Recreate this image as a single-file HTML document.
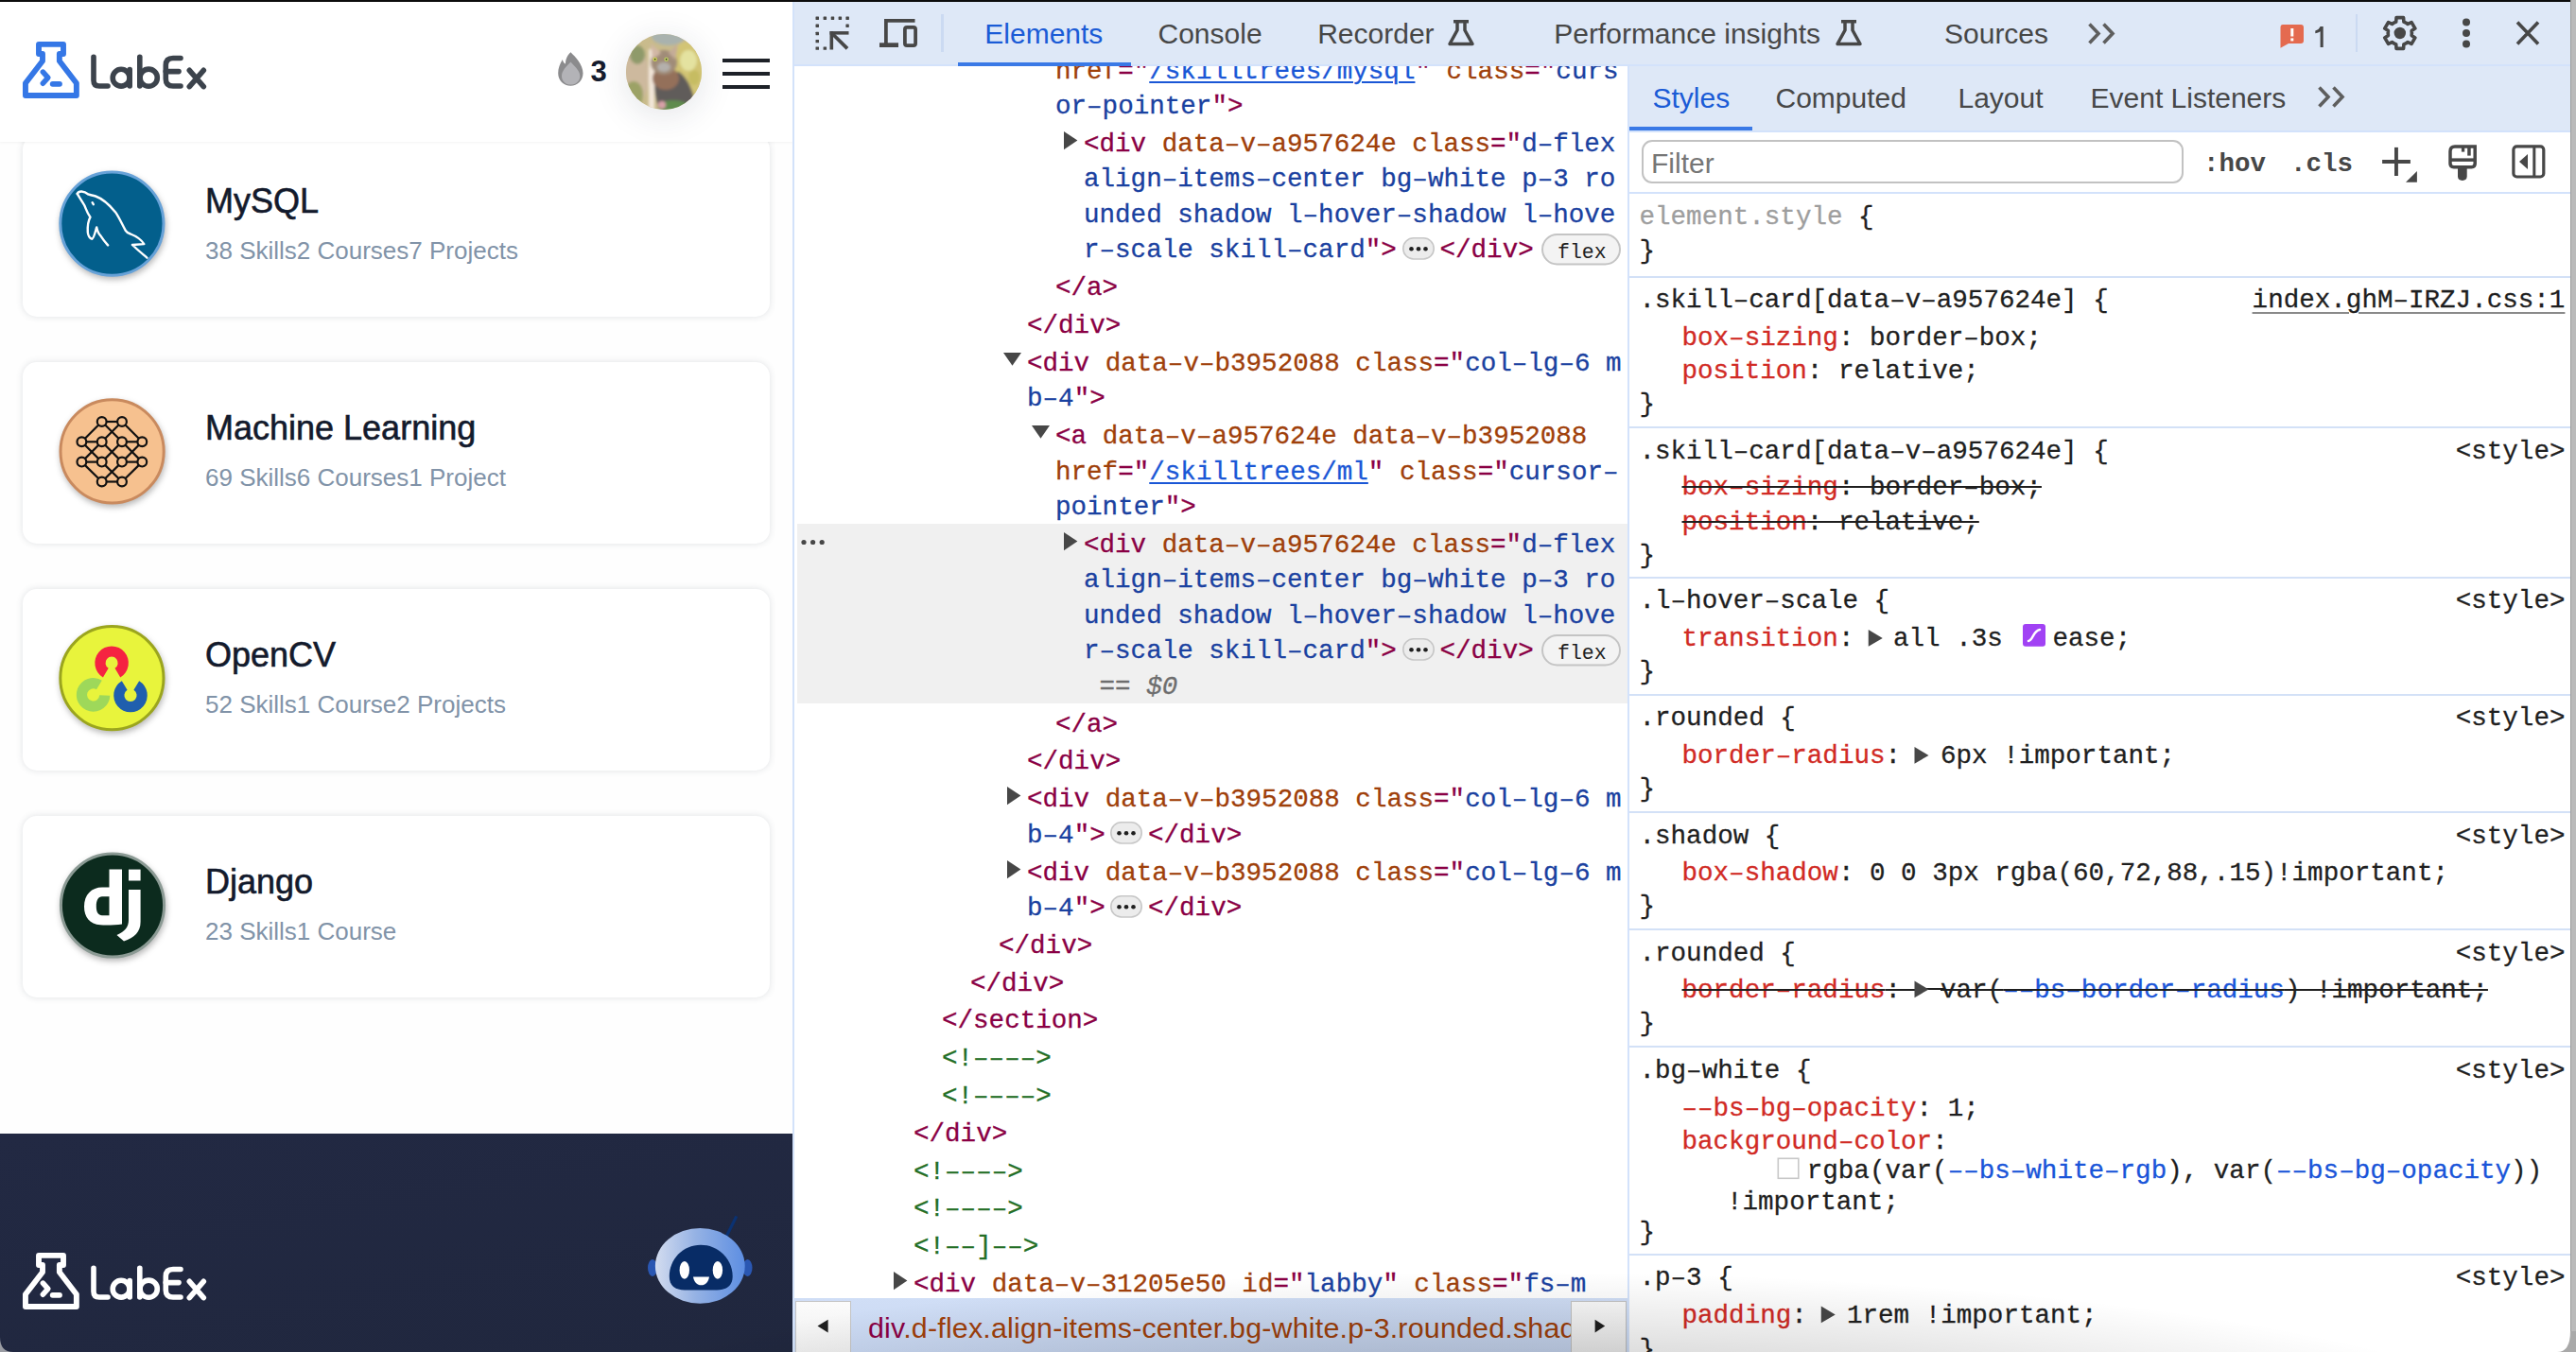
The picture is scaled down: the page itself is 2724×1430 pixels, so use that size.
<!DOCTYPE html><html><head><meta charset="utf-8"><style>
html,body{margin:0;padding:0;}
body{width:2724px;height:1430px;position:relative;overflow:hidden;background:#fff;}
.t{position:absolute;white-space:pre;}
.m{-webkit-text-stroke:0.3px currentColor;}
.r{position:absolute;}
.s{position:absolute;overflow:visible;}
</style></head><body>
<div class="r" style="left:0px;top:0px;width:838px;height:1430px;background:#fefefe;"></div>
<div class="r" style="left:24px;top:143px;width:790px;height:192px;background:#ffffff;border-radius:15px;box-shadow:0 0 7px rgba(60,72,88,.16);"></div>
<div class="r" style="left:24px;top:383px;width:790px;height:192px;background:#ffffff;border-radius:15px;box-shadow:0 0 7px rgba(60,72,88,.16);"></div>
<div class="r" style="left:24px;top:623px;width:790px;height:192px;background:#ffffff;border-radius:15px;box-shadow:0 0 7px rgba(60,72,88,.16);"></div>
<div class="r" style="left:24px;top:863px;width:790px;height:192px;background:#ffffff;border-radius:15px;box-shadow:0 0 7px rgba(60,72,88,.16);"></div>
<div class="r" style="left:0px;top:0px;width:838px;height:150px;background:#ffffff;box-shadow:0 1px 3px rgba(0,0,0,.05);"></div>
<svg class="s" style="left:0px;top:0px" width="240" height="120" viewBox="0 0 240 120">
<g fill="none" stroke-linecap="round" stroke-linejoin="round">
<path d="M45 57 L41 57 L41 46.9 L67 46.9 L67 57 L62.85 57 L62.85 64.5 L80.85 88 L80.85 100.95 L26.95 100.95 L26.95 88 L45 64.5 Z" stroke="#3577e6" stroke-width="5.9"/>
<path d="M45.4 76.2 L50.8 82.2 L45.4 88.2" stroke="#3577e6" stroke-width="5.6"/>
<path d="M55.7 88.8 L63 88.8" stroke="#3577e6" stroke-width="5.8"/>
<g stroke="#3c434c" stroke-width="5.6">
<path d="M99 60.3 L99 85 Q99 91 105 91 L114 91"/>
<circle cx="128.1" cy="82.2" r="8.9"/>
<path d="M137.2 73.6 L137.2 91"/>
<path d="M147.8 60.3 L147.8 91"/>
<circle cx="157.2" cy="82.2" r="9.1"/>
<path d="M191 61.5 L183 61.5 Q175.3 61.5 175.3 69 L175.3 83.5 Q175.3 91 183 91 L191 91"/>
<path d="M175.3 75.6 L189 75.6"/>
<path d="M200.3 74.3 L215.3 91.6 M215.3 74.3 L200.3 91.6"/>
</g></g></svg>
<svg class="s" style="left:585px;top:50px" width="40" height="46" viewBox="585 50 40 46">
<path d="M603.5 55.3 C608 60 616.5 68 616.5 77.5 C616.5 85 610.6 90.7 603.4 90.7 C596 90.7 590.2 85 590.2 77.5 C590.2 72 592 67.5 594.8 63 C595.5 65.5 596.5 67 598 67.5 C598 62 600.5 58 603.5 55.3 Z" fill="#8b8b8d"/>
<path d="M603.5 65.6 C607.5 70 613.3 75 613.3 80.5 C613.3 86 608.8 89.6 603.5 89.6 C598.2 89.6 594 86 594 80.5 C594 75 599 70 603.5 65.6 Z" fill="#b3b3b7"/>
</svg>
<div class="t" style="left:624.50px;top:60.25px;font-size:31px;line-height:31px;font-family:'Liberation Sans', sans-serif;color:#161c2e;font-weight:bold;">3</div>
<div class="r" style="left:662px;top:36px;width:80px;height:80px;border-radius:50%;box-shadow:0 6px 36px rgba(40,50,70,.13);"></div>
<svg class="s" style="left:662px;top:36px" width="80" height="80" viewBox="0 0 80 80">
<defs>
<clipPath id="avc"><circle cx="40" cy="40" r="40"/></clipPath>
<filter id="avb" x="-20%" y="-20%" width="140%" height="140%"><feGaussianBlur stdDeviation="1.6"/></filter>
</defs>
<g clip-path="url(#avc)">
<rect x="0" y="0" width="80" height="80" fill="#c9bb8c"/>
<g filter="url(#avb)">
<ellipse cx="65" cy="38" rx="22" ry="30" fill="#d2c474"/>
<ellipse cx="66" cy="28" rx="9" ry="11" fill="#e4e2a0"/>
<ellipse cx="72" cy="46" rx="6" ry="8" fill="#c6bc62"/>
<ellipse cx="10" cy="44" rx="14" ry="30" fill="#cdb99e"/>
<ellipse cx="8" cy="64" rx="10" ry="14" fill="#9ca266"/>
<ellipse cx="12" cy="22" rx="8" ry="10" fill="#8f9a6a"/>
<ellipse cx="45" cy="2" rx="18" ry="10" fill="#a9b2ae"/>
<rect x="24" y="16" width="6" height="64" fill="#f2e6da"/>
<path d="M31 42 C28 56 32 70 35 80 L74 80 C72 62 66 47 56 40 Z" fill="#615c5a"/>
<ellipse cx="42" cy="47" rx="14" ry="12" fill="#94705a"/>
<ellipse cx="40" cy="30" rx="14" ry="13" fill="#a08c78"/>
<path d="M26 10 L28 27 L37 20 Z" fill="#d2b8a6"/>
<path d="M55 10 L45 20 L52 27 Z" fill="#c4ac98"/>
<ellipse cx="40" cy="35" rx="7" ry="5" fill="#b4b0ac"/>
<ellipse cx="50" cy="77" rx="16" ry="7" fill="#5f8b4d"/>
<ellipse cx="38" cy="75" rx="4" ry="4" fill="#d8a0a8"/>
</g>
<circle cx="30.7" cy="26.8" r="2.3" fill="#c7cc55"/>
<circle cx="42.6" cy="26.8" r="2.3" fill="#b8c860"/>
<circle cx="30.7" cy="26.8" r="0.8" fill="#222"/>
<circle cx="42.6" cy="26.8" r="0.8" fill="#222"/>
</g></svg>
<div class="r" style="left:764px;top:62px;width:50px;height:4px;background:#1d2128;"></div>
<div class="r" style="left:764px;top:76px;width:50px;height:4px;background:#1d2128;"></div>
<div class="r" style="left:764px;top:90px;width:50px;height:4px;background:#1d2128;"></div>
<div class="t" style="left:217.00px;top:195.02px;font-size:36px;line-height:36px;font-family:'Liberation Sans', sans-serif;color:#131a2c;-webkit-text-stroke:0.6px #131a2c;">MySQL</div>
<div class="t" style="left:217.00px;top:251.59px;font-size:26px;line-height:26px;font-family:'Liberation Sans', sans-serif;color:#8193a8;">38 Skills2 Courses7 Projects</div>
<div class="t" style="left:217.00px;top:435.02px;font-size:36px;line-height:36px;font-family:'Liberation Sans', sans-serif;color:#131a2c;-webkit-text-stroke:0.6px #131a2c;">Machine Learning</div>
<div class="t" style="left:217.00px;top:491.59px;font-size:26px;line-height:26px;font-family:'Liberation Sans', sans-serif;color:#8193a8;">69 Skills6 Courses1 Project</div>
<div class="t" style="left:217.00px;top:675.02px;font-size:36px;line-height:36px;font-family:'Liberation Sans', sans-serif;color:#131a2c;-webkit-text-stroke:0.6px #131a2c;">OpenCV</div>
<div class="t" style="left:217.00px;top:731.59px;font-size:26px;line-height:26px;font-family:'Liberation Sans', sans-serif;color:#8193a8;">52 Skills1 Course2 Projects</div>
<div class="t" style="left:217.00px;top:915.02px;font-size:36px;line-height:36px;font-family:'Liberation Sans', sans-serif;color:#131a2c;-webkit-text-stroke:0.6px #131a2c;">Django</div>
<div class="t" style="left:217.00px;top:971.59px;font-size:26px;line-height:26px;font-family:'Liberation Sans', sans-serif;color:#8193a8;">23 Skills1 Course</div>
<svg class="s" style="left:56px;top:176px;filter:drop-shadow(1px 3px 3px rgba(0,0,0,.28));" width="124" height="124" viewBox="56 176 124 124">
<circle cx="118.4" cy="236.6" r="54.6" fill="#035f8c" stroke="#67a2d8" stroke-width="3"/>
<g fill="none" stroke="#ffffff" stroke-width="2.4" stroke-linejoin="round" stroke-linecap="round">
<path d="M81.7 204.9 C83 202 88 201 93.7 205.7 C96 206.5 98 206.5 101 207.5 C108 210 116 217 122.1 224.4 C126 230 129 237 132.8 243.9 C134 246 136 247 138.1 247.5 C142 249 149 253 152.3 258.1 L139.9 259 C143 262 150 268 155.4 272.7"/>
<path d="M81.7 204.9 C84 209 87 213 89.3 217.3 C91 221 92 225 95.5 229.7 C93 234 92.5 240 92.8 245.7 C93 249 95 252.5 97.3 252.8 C99 252.5 100 248 102.2 240.4 C103 244 105 248 106.2 249.2 C108 252 111 256 114.1 259.4"/>
<path d="M97.6 214.2 L98.8 216.2"/>
</g></svg>
<svg class="s" style="left:56px;top:416px;filter:drop-shadow(1px 3px 3px rgba(0,0,0,.28));" width="124" height="124" viewBox="56 416 124 124">
<circle cx="118.6" cy="477.4" r="54.6" fill="#f6c18f" stroke="#c98a5e" stroke-width="3"/>
<g stroke="#111" stroke-width="2.2" fill="none"><line x1="107.7" y1="446" x2="129" y2="446"/><line x1="107.7" y1="446" x2="86.4" y2="467.3"/><line x1="107.7" y1="446" x2="129" y2="467.3"/><line x1="129" y1="446" x2="107.7" y2="467.3"/><line x1="129" y1="446" x2="150.3" y2="467.3"/><line x1="86.4" y1="467.3" x2="107.7" y2="467.3"/><line x1="129" y1="467.3" x2="150.3" y2="467.3"/><line x1="86.4" y1="467.3" x2="107.7" y2="488.6"/><line x1="107.7" y1="467.3" x2="86.4" y2="488.6"/><line x1="107.7" y1="467.3" x2="129" y2="488.6"/><line x1="129" y1="467.3" x2="107.7" y2="488.6"/><line x1="129" y1="467.3" x2="150.3" y2="488.6"/><line x1="150.3" y1="467.3" x2="129" y2="488.6"/><line x1="86.4" y1="488.6" x2="107.7" y2="488.6"/><line x1="129" y1="488.6" x2="150.3" y2="488.6"/><line x1="86.4" y1="488.6" x2="107.7" y2="509.5"/><line x1="107.7" y1="488.6" x2="129" y2="509.5"/><line x1="129" y1="488.6" x2="107.7" y2="509.5"/><line x1="150.3" y1="488.6" x2="129" y2="509.5"/><line x1="107.7" y1="509.5" x2="129" y2="509.5"/></g>
<g stroke="#111" stroke-width="2.2" fill="#f6c18f"><circle cx="107.7" cy="446" r="4.9"/><circle cx="129" cy="446" r="4.9"/><circle cx="86.4" cy="467.3" r="4.9"/><circle cx="107.7" cy="467.3" r="4.9"/><circle cx="129" cy="467.3" r="4.9"/><circle cx="150.3" cy="467.3" r="4.9"/><circle cx="86.4" cy="488.6" r="4.9"/><circle cx="107.7" cy="488.6" r="4.9"/><circle cx="129" cy="488.6" r="4.9"/><circle cx="150.3" cy="488.6" r="4.9"/><circle cx="107.7" cy="509.5" r="4.9"/><circle cx="129" cy="509.5" r="4.9"/></g>
</svg>
<svg class="s" style="left:56px;top:656px;filter:drop-shadow(1px 3px 3px rgba(0,0,0,.28));" width="124" height="124" viewBox="56 656 124 124">
<circle cx="118.4" cy="717.2" r="54.6" fill="#e8f43c" stroke="#9ba51e" stroke-width="3"/>
<path d="M108.93 716.46 A17.8 17.8 0 1 1 127.27 716.46 L121.50 706.86 A6.6 6.6 0 1 0 114.70 706.86 Z" fill="#f52341"/><path d="M116.38 735.83 A17.8 17.8 0 1 1 107.77 719.64 L102.00 729.24 A6.6 6.6 0 1 0 105.19 735.25 Z" fill="#9ed85a"/><path d="M147.17 720.24 A17.8 17.8 0 1 1 128.83 720.24 L134.60 729.84 A6.6 6.6 0 1 0 141.40 729.84 Z" fill="#1f5fae"/>
</svg>
<svg class="s" style="left:56px;top:896px;filter:drop-shadow(1px 3px 3px rgba(0,0,0,.28));" width="124" height="124" viewBox="56 896 124 124">
<circle cx="119" cy="957.5" r="54.6" fill="#0c2b1e" stroke="#8b9a94" stroke-width="3"/>
</svg>
<svg class="s" style="left:80px;top:910px" width="80" height="95" viewBox="80 910 80 95">
<path fill="#fff" fill-rule="evenodd" d="M129 919.6 L129 977.5 C122 978.5 112 978.8 106 978.3 C95 977.5 89 970 89 959 C89 946 97 938.5 108 938.5 L115.5 938.5 L115.5 919.6 Z M115.5 948.2 L108 948.2 C104 948.2 101.8 952 101.8 958.5 C101.8 965 104 968.2 108 968.2 L115.5 968.2 Z"/>
<rect x="136" y="919.6" width="12.6" height="11.9" fill="#fff"/>
<path fill="#fff" d="M136 941 L148.6 941 L148.6 975 C148.6 986 142 991.5 131 995.5 L123.5 989 C132 985 136 981 136 973 Z"/>
</svg>
<div class="r" style="left:0px;top:1199px;width:838px;height:231px;background:#212840;background:linear-gradient(170deg,#222943 0%,#20273e 100%);"></div>
<svg class="s" style="left:0px;top:1281px" width="240" height="120" viewBox="0 0 240 120">
<g fill="none" stroke-linecap="round" stroke-linejoin="round">
<path d="M45 57 L41 57 L41 46.9 L67 46.9 L67 57 L62.85 57 L62.85 64.5 L80.85 88 L80.85 100.95 L26.95 100.95 L26.95 88 L45 64.5 Z" stroke="#fff" stroke-width="5.9"/>
<path d="M45.4 76.2 L50.8 82.2 L45.4 88.2" stroke="#fff" stroke-width="5.6"/>
<path d="M55.7 88.8 L63 88.8" stroke="#fff" stroke-width="5.8"/>
<g stroke="#fff" stroke-width="5.6">
<path d="M99 60.3 L99 85 Q99 91 105 91 L114 91"/>
<circle cx="128.1" cy="82.2" r="8.9"/>
<path d="M137.2 73.6 L137.2 91"/>
<path d="M147.8 60.3 L147.8 91"/>
<circle cx="157.2" cy="82.2" r="9.1"/>
<path d="M191 61.5 L183 61.5 Q175.3 61.5 175.3 69 L175.3 83.5 Q175.3 91 183 91 L191 91"/>
<path d="M175.3 75.6 L189 75.6"/>
<path d="M200.3 74.3 L215.3 91.6 M215.3 74.3 L200.3 91.6"/>
</g></g></svg>
<svg class="s" style="left:680px;top:1280px" width="120" height="105" viewBox="680 1280 120 105">
<defs><linearGradient id="rbg" x1="0" y1="0" x2="1" y2="0"><stop offset="0" stop-color="#d3dcef"/><stop offset="0.45" stop-color="#95b2e4"/><stop offset="1" stop-color="#5d8ee2"/></linearGradient></defs>
<line x1="766.2" y1="1311.6" x2="778.8" y2="1286.4" stroke="#0b3272" stroke-width="3.2"/>
<ellipse cx="690" cy="1341" rx="5" ry="9" fill="#2a57b2"/>
<ellipse cx="790.5" cy="1341" rx="5" ry="9" fill="#2a57b2"/>
<ellipse cx="740.3" cy="1338.9" rx="47.4" ry="39.9" fill="url(#rbg)"/>
<path d="M741 1316.8 C760 1316.8 774.7 1332 774.7 1350 C774.7 1360 768 1364.4 758 1364.4 L724 1364.4 C714 1364.4 707.8 1360 707.8 1350 C707.8 1332 722 1316.8 741 1316.8 Z" fill="#082c66"/>
<ellipse cx="723.8" cy="1343.4" rx="5.2" ry="9.4" fill="#fff"/>
<ellipse cx="758.9" cy="1343.4" rx="5.2" ry="9.4" fill="#fff"/>
<path d="M733 1350.5 L750 1350.5 C749 1356 746 1359.3 741.5 1359.3 C737 1359.3 734 1356 733 1350.5 Z" fill="#fff"/>
</svg>
<div class="r" style="left:0px;top:0px;width:2724px;height:2px;background:#0c0c0c;"></div>
<div class="r" style="left:2718px;top:0px;width:6px;height:1430px;background:#bababa;border-left:1px solid #9a9a9a;box-sizing:border-box;"></div>
<div class="r" style="left:838px;top:2px;width:2px;height:1428px;background:#d3e2fa;"></div>
<div class="r" style="left:840px;top:2px;width:1878px;height:66px;background:#dee8f7;"></div>
<div class="r" style="left:840px;top:68px;width:1878px;height:2px;background:#d3e2fb;"></div>
<svg class="s" style="left:855px;top:10px;" width="50" height="50" viewBox="855 10 50 50"><g fill="#474747"><rect x="862.5" y="17.5" width="3.5" height="3.4" rx="0.4"/><rect x="870.6" y="17.5" width="3.5" height="3.4" rx="0.4"/><rect x="878.7" y="17.5" width="3.5" height="3.4" rx="0.4"/><rect x="886.6" y="17.5" width="3.5" height="3.4" rx="0.4"/><rect x="894.4" y="17.5" width="3.5" height="3.4" rx="0.4"/><rect x="862.5" y="25.6" width="3.5" height="3.4" rx="0.4"/><rect x="862.5" y="33.75" width="3.5" height="3.4" rx="0.4"/><rect x="862.5" y="41.9" width="3.5" height="3.4" rx="0.4"/><rect x="862.5" y="49.4" width="3.5" height="3.4" rx="0.4"/><rect x="894.4" y="25.6" width="3.4" height="3.4" rx="0.4"/><rect x="870.6" y="49.4" width="3.5" height="3.4" rx="0.4"/>
<rect x="877.5" y="33.1" width="20" height="3.5"/><rect x="877.5" y="33.1" width="3.6" height="19.4"/></g>
<line x1="880" y1="35.5" x2="896" y2="51.3" stroke="#474747" stroke-width="3.8"/></svg>
<svg class="s" style="left:925px;top:15px;" width="50" height="40" viewBox="925 15 50 40"><g fill="#474747">
<rect x="935" y="20" width="32.5" height="3.75"/>
<rect x="935" y="20" width="3.75" height="27"/>
<rect x="930" y="45.3" width="20" height="4.7"/></g>
<rect x="956.9" y="28.8" width="11.2" height="19.3" rx="2.2" fill="none" stroke="#474747" stroke-width="3.75"/></svg>
<div class="r" style="left:995px;top:15px;width:2.5px;height:40px;background:#cbdaf2;"></div>
<div class="t" style="left:1041.30px;top:20.60px;font-size:30px;line-height:30px;font-family:'Liberation Sans', sans-serif;color:#1a5bd6;">Elements</div>
<div class="r" style="left:1013px;top:66px;width:183px;height:4px;background:#3a79e6;"></div>
<div class="t" style="left:1224.50px;top:20.60px;font-size:30px;line-height:30px;font-family:'Liberation Sans', sans-serif;color:#474747;">Console</div>
<div class="t" style="left:1393.20px;top:20.60px;font-size:30px;line-height:30px;font-family:'Liberation Sans', sans-serif;color:#474747;">Recorder</div>
<svg class="s" style="left:1528px;top:18px;" width="34" height="34" viewBox="1528 18 34 34"><path d="M1537 22.8 L1553 22.8 M1541 22.8 L1541 32 L1533 46.5 L1557 46.5 L1549 32 L1549 22.8" fill="none" stroke="#474747" stroke-width="3.5" stroke-linejoin="round"/></svg>
<div class="t" style="left:1643.20px;top:20.60px;font-size:30px;line-height:30px;font-family:'Liberation Sans', sans-serif;color:#474747;">Performance insights</div>
<svg class="s" style="left:1938px;top:18px;" width="34" height="34" viewBox="1938 18 34 34"><path d="M1947 22.8 L1963 22.8 M1951 22.8 L1951 32 L1943 46.5 L1967 46.5 L1959 32 L1959 22.8" fill="none" stroke="#474747" stroke-width="3.5" stroke-linejoin="round"/></svg>
<div class="t" style="left:2056.00px;top:20.60px;font-size:30px;line-height:30px;font-family:'Liberation Sans', sans-serif;color:#474747;">Sources</div>
<svg class="s" style="left:2204px;top:20px;" width="40" height="32" viewBox="2204 20 40 32"><path d="M2209.5 25.5 L2219 35.5 L2209.5 45.5 M2224.5 25.5 L2234 35.5 L2224.5 45.5" fill="none" stroke="#5e5e5e" stroke-width="3.6"/></svg>
<svg class="s" style="left:2405px;top:20px;" width="40" height="36" viewBox="2405 20 40 36"><path d="M2414 26 L2433 26 Q2436 26 2436 29 L2436 43 Q2436 46 2433 46 L2420 46 L2411.5 50.8 L2411.5 29 Q2411.5 26 2414 26 Z" fill="#e46a4f"/>
<rect x="2422.3" y="30" width="3" height="8.5" fill="#fff"/><rect x="2422.3" y="40.4" width="3" height="3" fill="#fff"/></svg>
<svg class="s" style="left:2444px;top:24px;" width="18" height="30" viewBox="2444 24 18 30"><path d="M2453.6 28 L2456.7 28 L2456.7 50 L2453.6 50 L2453.6 33.2 Q2451.5 34.8 2448.3 35.2 L2448.3 32.4 Q2452 31.6 2453.6 28 Z" fill="#474747"/></svg>
<div class="r" style="left:2491px;top:15px;width:2px;height:40px;background:#cbdaf2;"></div>
<svg class="s" style="left:2512px;top:10px;" width="52" height="52" viewBox="2512 10 52 52"><path d="M2531.50 24.09 L2533.70 23.09 L2534.02 18.63 L2541.58 18.63 L2541.90 23.09 L2544.10 24.09 L2546.07 25.49 L2550.09 23.54 L2553.87 30.09 L2550.17 32.60 L2550.40 35.00 L2550.17 37.40 L2553.87 39.91 L2550.09 46.46 L2546.07 44.51 L2544.10 45.91 L2541.90 46.91 L2541.58 51.37 L2534.02 51.37 L2533.70 46.91 L2531.50 45.91 L2529.53 44.51 L2525.51 46.46 L2521.73 39.91 L2525.43 37.40 L2525.20 35.00 L2525.43 32.60 L2521.73 30.09 L2525.51 23.54 L2529.53 25.49 Z" fill="none" stroke="#474747" stroke-width="3.6" stroke-linejoin="round"/>
<circle cx="2537.8" cy="35" r="6.2" fill="#474747"/></svg>
<svg class="s" style="left:2598px;top:15px;" width="20" height="40" viewBox="2598 15 20 40"><g fill="#474747"><circle cx="2608" cy="23.6" r="4"/><circle cx="2608" cy="35" r="4"/><circle cx="2608" cy="46.4" r="4"/></g></svg>
<svg class="s" style="left:2655px;top:16px;" width="36" height="38" viewBox="2655 16 36 38"><path d="M2662 23.5 L2684 46.5 M2684 23.5 L2662 46.5" stroke="#474747" stroke-width="3.6"/></svg>
<div class="r" style="left:840px;top:70px;width:881px;height:1303px;background:#ffffff;"></div>
<div class="r" style="left:0px;top:0px;width:2724px;height:1430px;clip-path:inset(70px 1003px 57px 840px);">
<div class="r" style="left:843px;top:553.75px;width:878px;height:190px;background:#f0f0f0;"></div>
<svg class="s" style="left:845px;top:565px;" width="30" height="16" viewBox="845 565 30 16"><g fill="#474747"><circle cx="850" cy="573.5" r="2.6"/><circle cx="859.6" cy="573.5" r="2.6"/><circle cx="869.2" cy="573.5" r="2.6"/></g></svg>
<div class="t m" style="left:1116.00px;top:61.98px;font-size:27.57px;line-height:27.57px;font-family:'Liberation Mono', monospace;"><span style="color:#9f400a;">href</span><span style="color:#8a0044;">="</span><span style="color:#1a57d6;text-decoration:underline;text-decoration-thickness:2px;text-underline-offset:3px;">/skilltrees/mysql</span><span style="color:#8a0044;">"</span><span style="color:#9f400a;"> class</span><span style="color:#8a0044;">="</span><span style="color:#1a41a0;">curs</span></div>
<div class="t m" style="left:1116.00px;top:99.28px;font-size:27.57px;line-height:27.57px;font-family:'Liberation Mono', monospace;"><span style="color:#1a41a0;">or–pointer</span><span style="color:#8a0044;">"&gt;</span></div>
<svg class="s" style="left:1124px;top:138px;" width="17" height="22" viewBox="1124 138 17 22"><path d="M1125 139 L1139.4 148.6 L1125 158.2 Z" fill="#474747"/></svg>
<div class="t m" style="left:1146.00px;top:138.88px;font-size:27.57px;line-height:27.57px;font-family:'Liberation Mono', monospace;"><span style="color:#8a0044;">&lt;div</span><span style="color:#9f400a;"> data–v–a957624e</span><span style="color:#9f400a;"> class</span><span style="color:#8a0044;">="</span><span style="color:#1a41a0;">d–flex</span></div>
<div class="t m" style="left:1146.00px;top:176.38px;font-size:27.57px;line-height:27.57px;font-family:'Liberation Mono', monospace;"><span style="color:#1a41a0;">align–items–center bg–white p–3 ro</span></div>
<div class="t m" style="left:1146.00px;top:213.88px;font-size:27.57px;line-height:27.57px;font-family:'Liberation Mono', monospace;"><span style="color:#1a41a0;">unded shadow l–hover–shadow l–hove</span></div>
<div class="t m" style="left:1146.00px;top:251.38px;font-size:27.57px;line-height:27.57px;font-family:'Liberation Mono', monospace;"><span style="color:#1a41a0;">r–scale skill–card</span><span style="color:#8a0044;">"&gt;</span></div>
<svg class="s" style="left:1481.5px;top:250.0px;" width="37" height="26" viewBox="1481.5 250.0 37 26"><rect x="1483.3" y="251.8" width="32.4" height="22.2" rx="11" fill="#ececec" stroke="#c7c7c7" stroke-width="1.6"/>
<g fill="#1f1f1f"><circle cx="1492.0" cy="263.3" r="2.3"/><circle cx="1499.5" cy="263.3" r="2.3"/><circle cx="1507.0" cy="263.3" r="2.3"/></g></svg>
<div class="t m" style="left:1522.50px;top:251.38px;font-size:27.57px;line-height:27.57px;font-family:'Liberation Mono', monospace;"><span style="color:#8a0044;">&lt;/div&gt;</span></div>
<svg class="s" style="left:1628.5px;top:245.5px;" width="87" height="36" viewBox="1628.5 245.5 87 36"><rect x="1630.5" y="247.5" width="82" height="31.5" rx="15.7" fill="#f3f3f3" stroke="#c4c4c4" stroke-width="2"/></svg>
<div class="t" style="left:1647.00px;top:256.53px;font-size:21.5px;line-height:21.5px;font-family:'Liberation Mono', monospace;color:#1f1f1f;">flex</div>
<div class="t m" style="left:1116.00px;top:291.18px;font-size:27.57px;line-height:27.57px;font-family:'Liberation Mono', monospace;"><span style="color:#8a0044;">&lt;/a&gt;</span></div>
<div class="t m" style="left:1086.00px;top:330.98px;font-size:27.57px;line-height:27.57px;font-family:'Liberation Mono', monospace;"><span style="color:#8a0044;">&lt;/div&gt;</span></div>
<svg class="s" style="left:1060px;top:372.15000000000003px;" width="22" height="17" viewBox="1060 372.15000000000003 22 17"><path d="M1061 373.15000000000003 L1080 373.15000000000003 L1070.5 386.90000000000003 Z" fill="#474747"/></svg>
<div class="t m" style="left:1086.00px;top:370.78px;font-size:27.57px;line-height:27.57px;font-family:'Liberation Mono', monospace;"><span style="color:#8a0044;">&lt;div</span><span style="color:#9f400a;"> data–v–b3952088</span><span style="color:#9f400a;"> class</span><span style="color:#8a0044;">="</span><span style="color:#1a41a0;">col–lg–6 m</span></div>
<div class="t m" style="left:1086.00px;top:408.28px;font-size:27.57px;line-height:27.57px;font-family:'Liberation Mono', monospace;"><span style="color:#1a41a0;">b–4</span><span style="color:#8a0044;">"&gt;</span></div>
<svg class="s" style="left:1090px;top:449.45000000000005px;" width="22" height="17" viewBox="1090 449.45000000000005 22 17"><path d="M1091 450.45000000000005 L1110 450.45000000000005 L1100.5 464.20000000000005 Z" fill="#474747"/></svg>
<div class="t m" style="left:1116.00px;top:448.08px;font-size:27.57px;line-height:27.57px;font-family:'Liberation Mono', monospace;"><span style="color:#8a0044;">&lt;a</span><span style="color:#9f400a;"> data–v–a957624e</span><span style="color:#9f400a;"> data–v–b3952088</span></div>
<div class="t m" style="left:1116.00px;top:485.58px;font-size:27.57px;line-height:27.57px;font-family:'Liberation Mono', monospace;"><span style="color:#9f400a;">href</span><span style="color:#8a0044;">="</span><span style="color:#1a57d6;text-decoration:underline;text-decoration-thickness:2px;text-underline-offset:3px;">/skilltrees/ml</span><span style="color:#8a0044;">"</span><span style="color:#9f400a;"> class</span><span style="color:#8a0044;">="</span><span style="color:#1a41a0;">cursor–</span></div>
<div class="t m" style="left:1116.00px;top:523.08px;font-size:27.57px;line-height:27.57px;font-family:'Liberation Mono', monospace;"><span style="color:#1a41a0;">pointer</span><span style="color:#8a0044;">"&gt;</span></div>
<svg class="s" style="left:1124px;top:562.0px;" width="17" height="22" viewBox="1124 562.0 17 22"><path d="M1125 563.0 L1139.4 572.6 L1125 582.2 Z" fill="#474747"/></svg>
<div class="t m" style="left:1146.00px;top:562.88px;font-size:27.57px;line-height:27.57px;font-family:'Liberation Mono', monospace;"><span style="color:#8a0044;">&lt;div</span><span style="color:#9f400a;"> data–v–a957624e</span><span style="color:#9f400a;"> class</span><span style="color:#8a0044;">="</span><span style="color:#1a41a0;">d–flex</span></div>
<div class="t m" style="left:1146.00px;top:600.38px;font-size:27.57px;line-height:27.57px;font-family:'Liberation Mono', monospace;"><span style="color:#1a41a0;">align–items–center bg–white p–3 ro</span></div>
<div class="t m" style="left:1146.00px;top:637.88px;font-size:27.57px;line-height:27.57px;font-family:'Liberation Mono', monospace;"><span style="color:#1a41a0;">unded shadow l–hover–shadow l–hove</span></div>
<div class="t m" style="left:1146.00px;top:675.38px;font-size:27.57px;line-height:27.57px;font-family:'Liberation Mono', monospace;"><span style="color:#1a41a0;">r–scale skill–card</span><span style="color:#8a0044;">"&gt;</span></div>
<svg class="s" style="left:1481.5px;top:674.0px;" width="37" height="26" viewBox="1481.5 674.0 37 26"><rect x="1483.3" y="675.8" width="32.4" height="22.2" rx="11" fill="#ececec" stroke="#c7c7c7" stroke-width="1.6"/>
<g fill="#1f1f1f"><circle cx="1492.0" cy="687.3" r="2.3"/><circle cx="1499.5" cy="687.3" r="2.3"/><circle cx="1507.0" cy="687.3" r="2.3"/></g></svg>
<div class="t m" style="left:1522.50px;top:675.38px;font-size:27.57px;line-height:27.57px;font-family:'Liberation Mono', monospace;"><span style="color:#8a0044;">&lt;/div&gt;</span></div>
<svg class="s" style="left:1628.5px;top:669.5px;" width="87" height="36" viewBox="1628.5 669.5 87 36"><rect x="1630.5" y="671.5" width="82" height="31.5" rx="15.7" fill="#f3f3f3" stroke="#c4c4c4" stroke-width="2"/></svg>
<div class="t" style="left:1647.00px;top:680.53px;font-size:21.5px;line-height:21.5px;font-family:'Liberation Mono', monospace;color:#1f1f1f;">flex</div>
<div class="t m" style="left:1146.00px;top:712.88px;font-size:27.57px;line-height:27.57px;font-family:'Liberation Mono', monospace;"><span style="color:#6e6e6e;"> == </span><span style="color:#6e6e6e;font-style:italic;">$0</span></div>
<div class="t m" style="left:1116.00px;top:752.68px;font-size:27.57px;line-height:27.57px;font-family:'Liberation Mono', monospace;"><span style="color:#8a0044;">&lt;/a&gt;</span></div>
<div class="t m" style="left:1086.00px;top:792.48px;font-size:27.57px;line-height:27.57px;font-family:'Liberation Mono', monospace;"><span style="color:#8a0044;">&lt;/div&gt;</span></div>
<svg class="s" style="left:1064px;top:831.3999999999999px;" width="17" height="22" viewBox="1064 831.3999999999999 17 22"><path d="M1065 832.3999999999999 L1079.4 841.9999999999999 L1065 851.5999999999999 Z" fill="#474747"/></svg>
<div class="t m" style="left:1086.00px;top:832.28px;font-size:27.57px;line-height:27.57px;font-family:'Liberation Mono', monospace;"><span style="color:#8a0044;">&lt;div</span><span style="color:#9f400a;"> data–v–b3952088</span><span style="color:#9f400a;"> class</span><span style="color:#8a0044;">="</span><span style="color:#1a41a0;">col–lg–6 m</span></div>
<div class="t m" style="left:1086.00px;top:869.78px;font-size:27.57px;line-height:27.57px;font-family:'Liberation Mono', monospace;"><span style="color:#1a41a0;">b–4</span><span style="color:#8a0044;">"&gt;</span></div>
<svg class="s" style="left:1172.75px;top:868.3999999999999px;" width="37" height="26" viewBox="1172.75 868.3999999999999 37 26"><rect x="1174.55" y="870.1999999999998" width="32.4" height="22.2" rx="11" fill="#ececec" stroke="#c7c7c7" stroke-width="1.6"/>
<g fill="#1f1f1f"><circle cx="1183.25" cy="881.6999999999998" r="2.3"/><circle cx="1190.75" cy="881.6999999999998" r="2.3"/><circle cx="1198.25" cy="881.6999999999998" r="2.3"/></g></svg>
<div class="t m" style="left:1214.00px;top:869.78px;font-size:27.57px;line-height:27.57px;font-family:'Liberation Mono', monospace;"><span style="color:#8a0044;">&lt;/div&gt;</span></div>
<svg class="s" style="left:1064px;top:908.6999999999998px;" width="17" height="22" viewBox="1064 908.6999999999998 17 22"><path d="M1065 909.6999999999998 L1079.4 919.2999999999998 L1065 928.8999999999999 Z" fill="#474747"/></svg>
<div class="t m" style="left:1086.00px;top:909.58px;font-size:27.57px;line-height:27.57px;font-family:'Liberation Mono', monospace;"><span style="color:#8a0044;">&lt;div</span><span style="color:#9f400a;"> data–v–b3952088</span><span style="color:#9f400a;"> class</span><span style="color:#8a0044;">="</span><span style="color:#1a41a0;">col–lg–6 m</span></div>
<div class="t m" style="left:1086.00px;top:947.08px;font-size:27.57px;line-height:27.57px;font-family:'Liberation Mono', monospace;"><span style="color:#1a41a0;">b–4</span><span style="color:#8a0044;">"&gt;</span></div>
<svg class="s" style="left:1172.75px;top:945.6999999999998px;" width="37" height="26" viewBox="1172.75 945.6999999999998 37 26"><rect x="1174.55" y="947.4999999999998" width="32.4" height="22.2" rx="11" fill="#ececec" stroke="#c7c7c7" stroke-width="1.6"/>
<g fill="#1f1f1f"><circle cx="1183.25" cy="958.9999999999998" r="2.3"/><circle cx="1190.75" cy="958.9999999999998" r="2.3"/><circle cx="1198.25" cy="958.9999999999998" r="2.3"/></g></svg>
<div class="t m" style="left:1214.00px;top:947.08px;font-size:27.57px;line-height:27.57px;font-family:'Liberation Mono', monospace;"><span style="color:#8a0044;">&lt;/div&gt;</span></div>
<div class="t m" style="left:1056.00px;top:986.88px;font-size:27.57px;line-height:27.57px;font-family:'Liberation Mono', monospace;"><span style="color:#8a0044;">&lt;/div&gt;</span></div>
<div class="t m" style="left:1026.00px;top:1026.68px;font-size:27.57px;line-height:27.57px;font-family:'Liberation Mono', monospace;"><span style="color:#8a0044;">&lt;/div&gt;</span></div>
<div class="t m" style="left:996.00px;top:1066.48px;font-size:27.57px;line-height:27.57px;font-family:'Liberation Mono', monospace;"><span style="color:#8a0044;">&lt;/section&gt;</span></div>
<div class="t m" style="left:996.00px;top:1106.28px;font-size:27.57px;line-height:27.57px;font-family:'Liberation Mono', monospace;"><span style="color:#236e25;">&lt;!––––&gt;</span></div>
<div class="t m" style="left:996.00px;top:1146.08px;font-size:27.57px;line-height:27.57px;font-family:'Liberation Mono', monospace;"><span style="color:#236e25;">&lt;!––––&gt;</span></div>
<div class="t m" style="left:966.00px;top:1185.88px;font-size:27.57px;line-height:27.57px;font-family:'Liberation Mono', monospace;"><span style="color:#8a0044;">&lt;/div&gt;</span></div>
<div class="t m" style="left:966.00px;top:1225.68px;font-size:27.57px;line-height:27.57px;font-family:'Liberation Mono', monospace;"><span style="color:#236e25;">&lt;!––––&gt;</span></div>
<div class="t m" style="left:966.00px;top:1265.48px;font-size:27.57px;line-height:27.57px;font-family:'Liberation Mono', monospace;"><span style="color:#236e25;">&lt;!––––&gt;</span></div>
<div class="t m" style="left:966.00px;top:1305.28px;font-size:27.57px;line-height:27.57px;font-family:'Liberation Mono', monospace;"><span style="color:#236e25;">&lt;!––]––&gt;</span></div>
<svg class="s" style="left:944px;top:1344.1999999999994px;" width="17" height="22" viewBox="944 1344.1999999999994 17 22"><path d="M945 1345.1999999999994 L959.4 1354.7999999999993 L945 1364.3999999999994 Z" fill="#474747"/></svg>
<div class="t m" style="left:966.00px;top:1345.08px;font-size:27.57px;line-height:27.57px;font-family:'Liberation Mono', monospace;"><span style="color:#8a0044;">&lt;div</span><span style="color:#9f400a;"> data–v–31205e50</span><span style="color:#9f400a;"> id</span><span style="color:#8a0044;">="</span><span style="color:#1a41a0;">labby</span><span style="color:#8a0044;">"</span><span style="color:#9f400a;"> class</span><span style="color:#8a0044;">="</span><span style="color:#1a41a0;">fs–m</span></div>
<div class="t m" style="left:966.00px;top:1384.88px;font-size:27.57px;line-height:27.57px;font-family:'Liberation Mono', monospace;"><span style="color:#8a0044;"></span></div>
</div>
<div class="r" style="left:840px;top:1373px;width:881px;height:57px;background:#cddcf6;background:linear-gradient(#d0def6,#c8d7f1);"></div>
<div class="r" style="left:841px;top:1376px;width:59px;height:60px;background:#f6f6f6;border:1.5px solid #c3c3c3;box-sizing:border-box;background:linear-gradient(#fbfbfb,#eeeeee);"></div>
<svg class="s" style="left:862px;top:1393px;" width="16" height="20" viewBox="862 1393 16 20"><path d="M875.6 1395.7 L864.5 1402.6 L875.6 1409.5 Z" fill="#1f1f1f"/></svg>
<div class="t" style="left:918px;top:1388.66px;width:743px;height:42px;overflow:hidden;font-size:30.4px;line-height:30.4px;letter-spacing:0.2px;font-family:'Liberation Sans', sans-serif;"><span style="color:#8a0044">div</span><span style="color:#9f400a">.d-flex.align-items-center.bg-white.p-3.rounded.shadow.l-hover-shadow</span></div>
<div class="r" style="left:1661.4px;top:1376px;width:59px;height:60px;background:#f6f6f6;border:1.5px solid #c3c3c3;box-sizing:border-box;background:linear-gradient(#fbfbfb,#eeeeee);"></div>
<svg class="s" style="left:1684px;top:1393px;" width="16" height="20" viewBox="1684 1393 16 20"><path d="M1686.6 1395.7 L1697.2 1402.6 L1686.6 1409.5 Z" fill="#1f1f1f"/></svg>
<div class="r" style="left:1721px;top:70px;width:2px;height:1360px;background:#d3e2fb;"></div>
<div class="r" style="left:1723px;top:70px;width:995px;height:68px;background:#dee8f7;"></div>
<div class="r" style="left:1723px;top:137.5px;width:995px;height:2px;background:#d3e2fb;"></div>
<div class="t" style="left:1747.50px;top:88.60px;font-size:30px;line-height:30px;font-family:'Liberation Sans', sans-serif;color:#1a5bd6;">Styles</div>
<div class="r" style="left:1723px;top:134px;width:130px;height:4px;background:#3a79e6;"></div>
<div class="t" style="left:1877.50px;top:88.60px;font-size:30px;line-height:30px;font-family:'Liberation Sans', sans-serif;color:#474747;">Computed</div>
<div class="t" style="left:2070.50px;top:88.60px;font-size:30px;line-height:30px;font-family:'Liberation Sans', sans-serif;color:#474747;">Layout</div>
<div class="t" style="left:2210.50px;top:88.60px;font-size:30px;line-height:30px;font-family:'Liberation Sans', sans-serif;color:#474747;">Event Listeners</div>
<svg class="s" style="left:2447px;top:87px;" width="40" height="32" viewBox="2447 87 40 32"><path d="M2452.5 92.5 L2462 102.5 L2452.5 112.5 M2467.5 92.5 L2477 102.5 L2467.5 112.5" fill="none" stroke="#5e5e5e" stroke-width="3.6"/></svg>
<div class="r" style="left:1723px;top:139.5px;width:995px;height:64px;background:#ffffff;"></div>
<div class="r" style="left:1736px;top:147.5px;width:573px;height:46.5px;background:#ffffff;border:2.2px solid #c2c2c2;border-radius:11px;box-sizing:border-box;"></div>
<div class="t" style="left:1746.00px;top:157.60px;font-size:30px;line-height:30px;font-family:'Liberation Sans', sans-serif;color:#767676;">Filter</div>
<div class="t" style="left:2330.00px;top:159.93px;font-size:27.5px;line-height:27.5px;font-family:'Liberation Mono', monospace;color:#474747;font-weight:bold;">:hov</div>
<div class="t" style="left:2422.00px;top:159.93px;font-size:27.5px;line-height:27.5px;font-family:'Liberation Mono', monospace;color:#474747;font-weight:bold;">.cls</div>
<svg class="s" style="left:2515px;top:150px;" width="45" height="45" viewBox="2515 150 45 45"><rect x="2519.1" y="169" width="29.8" height="4" fill="#474747"/><rect x="2532" y="155.9" width="3.9" height="30.1" fill="#474747"/>
<path d="M2555.9 180.9 L2555.9 192.7 L2544 192.7 Z" fill="#474747"/></svg>
<svg class="s" style="left:2585px;top:150px;" width="40" height="45" viewBox="2585 150 40 45"><path d="M2596 154.9 L2617.2 154.9 L2617.2 173 Q2617.2 176.7 2613.5 176.7 L2594.8 176.7 Q2591 176.7 2591 173 L2591 160 Q2591 154.9 2596 154.9 Z" fill="none" stroke="#474747" stroke-width="3.5"/>
<rect x="2591" y="167.4" width="26" height="3.5" fill="#474747"/>
<rect x="2602.9" y="156" width="3.3" height="4.6" fill="#474747"/><rect x="2609.2" y="156" width="3.5" height="8.6" fill="#474747"/>
<path d="M2599 178 L2608.7 178 L2608.7 186.5 Q2608.7 190.9 2603.85 190.9 Q2599 190.9 2599 186.5 Z" fill="#474747"/></svg>
<svg class="s" style="left:2650px;top:148px;" width="45" height="45" viewBox="2650 148 45 45"><rect x="2657.9" y="154.8" width="31.9" height="32.2" rx="3.5" fill="none" stroke="#474747" stroke-width="3.2"/>
<rect x="2678.3" y="154.8" width="3" height="32" fill="#474747"/>
<path d="M2673 163 L2664 171 L2673 179 Z" fill="#474747"/></svg>
<div class="r" style="left:1723px;top:203px;width:995px;height:2px;background:#d3e2fb;"></div>
<div class="t m" style="left:1733.50px;top:216.03px;font-size:27.57px;line-height:27.57px;font-family:'Liberation Mono', monospace;"><span style="color:#9e9e9e;">element.style</span><span style="color:#1f1f1f;"> {</span></div>
<div class="t m" style="left:1733.50px;top:252.28px;font-size:27.57px;line-height:27.57px;font-family:'Liberation Mono', monospace;"><span style="color:#1f1f1f;">}</span></div>
<div class="r" style="left:1723px;top:292px;width:995px;height:2px;background:#d3e1f7;"></div>
<div class="t m" style="left:1733.50px;top:303.53px;font-size:27.57px;line-height:27.57px;font-family:'Liberation Mono', monospace;"><span style="color:#1f1f1f;">.skill–card[data–v–a957624e] {</span></div>
<div class="t m" style="left:2381.60px;top:303.53px;font-size:27.57px;line-height:27.57px;font-family:'Liberation Mono', monospace;"><span style="color:#1f1f1f;text-decoration:underline;text-decoration-color:#8a8a8a;text-decoration-thickness:2px;text-underline-offset:5px;">index.ghM–IRZJ.css:1</span></div>
<div class="t m" style="left:1778.50px;top:343.53px;font-size:27.57px;line-height:27.57px;font-family:'Liberation Mono', monospace;"><span style="color:#d12b25;">box–sizing</span><span style="color:#1f1f1f;">: border–box;</span></div>
<div class="t m" style="left:1778.50px;top:378.53px;font-size:27.57px;line-height:27.57px;font-family:'Liberation Mono', monospace;"><span style="color:#d12b25;">position</span><span style="color:#1f1f1f;">: relative;</span></div>
<div class="t m" style="left:1733.50px;top:413.53px;font-size:27.57px;line-height:27.57px;font-family:'Liberation Mono', monospace;"><span style="color:#1f1f1f;">}</span></div>
<div class="r" style="left:1723px;top:450.75px;width:995px;height:2px;background:#d3e1f7;"></div>
<div class="t m" style="left:1733.50px;top:463.53px;font-size:27.57px;line-height:27.57px;font-family:'Liberation Mono', monospace;"><span style="color:#1f1f1f;">.skill–card[data–v–a957624e] {</span></div>
<div class="t m" style="left:2596.69px;top:463.53px;font-size:27.57px;line-height:27.57px;font-family:'Liberation Mono', monospace;"><span style="color:#1f1f1f;">&lt;style&gt;</span></div>
<div class="t m" style="left:1778.50px;top:502.28px;font-size:27.57px;line-height:27.57px;font-family:'Liberation Mono', monospace;text-decoration:line-through;text-decoration-thickness:1.8px;text-decoration-color:#1f1f1f;"><span style="color:#d12b25;">box–sizing</span><span style="color:#1f1f1f;">: border–box;</span></div>
<div class="t m" style="left:1778.50px;top:538.53px;font-size:27.57px;line-height:27.57px;font-family:'Liberation Mono', monospace;text-decoration:line-through;text-decoration-thickness:1.8px;text-decoration-color:#1f1f1f;"><span style="color:#d12b25;">position</span><span style="color:#1f1f1f;">: relative;</span></div>
<div class="t m" style="left:1733.50px;top:573.53px;font-size:27.57px;line-height:27.57px;font-family:'Liberation Mono', monospace;"><span style="color:#1f1f1f;">}</span></div>
<div class="r" style="left:1723px;top:610.25px;width:995px;height:2px;background:#d3e1f7;"></div>
<div class="t m" style="left:1733.50px;top:622.28px;font-size:27.57px;line-height:27.57px;font-family:'Liberation Mono', monospace;"><span style="color:#1f1f1f;">.l–hover–scale {</span></div>
<div class="t m" style="left:2596.69px;top:622.28px;font-size:27.57px;line-height:27.57px;font-family:'Liberation Mono', monospace;"><span style="color:#1f1f1f;">&lt;style&gt;</span></div>
<div class="t m" style="left:1778.50px;top:662.28px;font-size:27.57px;line-height:27.57px;font-family:'Liberation Mono', monospace;"><span style="color:#d12b25;">transition</span><span style="color:#1f1f1f;">:</span></div>
<div class="t m" style="left:2002.00px;top:662.28px;font-size:27.57px;line-height:27.57px;font-family:'Liberation Mono', monospace;"><span style="color:#1f1f1f;">all .3s</span></div>
<div class="t m" style="left:2170.50px;top:662.28px;font-size:27.57px;line-height:27.57px;font-family:'Liberation Mono', monospace;"><span style="color:#1f1f1f;">ease;</span></div>
<svg class="s" style="left:1973px;top:663px;" width="20" height="24" viewBox="1973 663 20 24"><path d="M1975.75 666 L1990.75 674.9 L1975.75 683.75 Z" fill="#474747"/></svg>
<svg class="s" style="left:2137px;top:658px;" width="28" height="28" viewBox="2137 658 28 28"><rect x="2139" y="660" width="24" height="23.75" rx="3" fill="#a142f4"/><path d="M2145 678 C2150 677 2150 667 2157 666" stroke="#fff" stroke-width="2.6" fill="none" stroke-linecap="round"/></svg>
<div class="t m" style="left:1733.50px;top:697.28px;font-size:27.57px;line-height:27.57px;font-family:'Liberation Mono', monospace;"><span style="color:#1f1f1f;">}</span></div>
<div class="r" style="left:1723px;top:733.5px;width:995px;height:2px;background:#d3e1f7;"></div>
<div class="t m" style="left:1733.50px;top:746.03px;font-size:27.57px;line-height:27.57px;font-family:'Liberation Mono', monospace;"><span style="color:#1f1f1f;">.rounded {</span></div>
<div class="t m" style="left:2596.69px;top:746.03px;font-size:27.57px;line-height:27.57px;font-family:'Liberation Mono', monospace;"><span style="color:#1f1f1f;">&lt;style&gt;</span></div>
<div class="t m" style="left:1778.50px;top:786.03px;font-size:27.57px;line-height:27.57px;font-family:'Liberation Mono', monospace;"><span style="color:#d12b25;">border–radius</span><span style="color:#1f1f1f;">:</span></div>
<div class="t m" style="left:2052.00px;top:786.03px;font-size:27.57px;line-height:27.57px;font-family:'Liberation Mono', monospace;"><span style="color:#1f1f1f;">6px !important;</span></div>
<svg class="s" style="left:2022px;top:787px;" width="20" height="24" viewBox="2022 787 20 24"><path d="M2024.5 790 L2039.5 798.9 L2024.5 807.75 Z" fill="#474747"/></svg>
<div class="t m" style="left:1733.50px;top:821.03px;font-size:27.57px;line-height:27.57px;font-family:'Liberation Mono', monospace;"><span style="color:#1f1f1f;">}</span></div>
<div class="r" style="left:1723px;top:857.75px;width:995px;height:2px;background:#d3e1f7;"></div>
<div class="t m" style="left:1733.50px;top:871.03px;font-size:27.57px;line-height:27.57px;font-family:'Liberation Mono', monospace;"><span style="color:#1f1f1f;">.shadow {</span></div>
<div class="t m" style="left:2596.69px;top:871.03px;font-size:27.57px;line-height:27.57px;font-family:'Liberation Mono', monospace;"><span style="color:#1f1f1f;">&lt;style&gt;</span></div>
<div class="t m" style="left:1778.50px;top:909.78px;font-size:27.57px;line-height:27.57px;font-family:'Liberation Mono', monospace;"><span style="color:#d12b25;">box–shadow</span><span style="color:#1f1f1f;">: 0 0 3px rgba(60,72,88,.15)!important;</span></div>
<div class="t m" style="left:1733.50px;top:944.78px;font-size:27.57px;line-height:27.57px;font-family:'Liberation Mono', monospace;"><span style="color:#1f1f1f;">}</span></div>
<div class="r" style="left:1723px;top:982px;width:995px;height:2px;background:#d3e1f7;"></div>
<div class="t m" style="left:1733.50px;top:994.78px;font-size:27.57px;line-height:27.57px;font-family:'Liberation Mono', monospace;"><span style="color:#1f1f1f;">.rounded {</span></div>
<div class="t m" style="left:2596.69px;top:994.78px;font-size:27.57px;line-height:27.57px;font-family:'Liberation Mono', monospace;"><span style="color:#1f1f1f;">&lt;style&gt;</span></div>
<div class="t m" style="left:1778.50px;top:1033.53px;font-size:27.57px;line-height:27.57px;font-family:'Liberation Mono', monospace;text-decoration:line-through;text-decoration-thickness:1.8px;text-decoration-color:#1f1f1f;"><span style="color:#d12b25;">border–radius</span><span style="color:#1f1f1f;">: </span></div>
<div class="r" style="left:2028px;top:1044.8px;width:28px;height:1.8px;background:#1f1f1f;"></div>
<div class="t m" style="left:2052.00px;top:1033.53px;font-size:27.57px;line-height:27.57px;font-family:'Liberation Mono', monospace;text-decoration:line-through;text-decoration-thickness:1.8px;text-decoration-color:#1f1f1f;"><span style="color:#1f1f1f;">var(</span><span style="color:#1a55d9;">––bs–border–radius</span><span style="color:#1f1f1f;">) !important;</span></div>
<svg class="s" style="left:2022px;top:1034px;" width="20" height="24" viewBox="2022 1034 20 24"><path d="M2024.5 1037.5 L2039.5 1046.4 L2024.5 1055.25 Z" fill="#474747"/></svg>
<div class="t m" style="left:1733.50px;top:1068.53px;font-size:27.57px;line-height:27.57px;font-family:'Liberation Mono', monospace;"><span style="color:#1f1f1f;">}</span></div>
<div class="r" style="left:1723px;top:1106px;width:995px;height:2px;background:#d3e1f7;"></div>
<div class="t m" style="left:1733.50px;top:1118.78px;font-size:27.57px;line-height:27.57px;font-family:'Liberation Mono', monospace;"><span style="color:#1f1f1f;">.bg–white {</span></div>
<div class="t m" style="left:2596.69px;top:1118.78px;font-size:27.57px;line-height:27.57px;font-family:'Liberation Mono', monospace;"><span style="color:#1f1f1f;">&lt;style&gt;</span></div>
<div class="t m" style="left:1778.50px;top:1158.78px;font-size:27.57px;line-height:27.57px;font-family:'Liberation Mono', monospace;"><span style="color:#d12b25;">––bs–bg–opacity</span><span style="color:#1f1f1f;">: 1;</span></div>
<div class="t m" style="left:1778.50px;top:1193.78px;font-size:27.57px;line-height:27.57px;font-family:'Liberation Mono', monospace;"><span style="color:#d12b25;">background–color</span><span style="color:#1f1f1f;">:</span></div>
<svg class="s" style="left:1877px;top:1222px;" width="28" height="28" viewBox="1877 1222 28 28"><rect x="1880.3" y="1225.3" width="21.5" height="21" fill="#fff" stroke="#c8c8c8" stroke-width="1.6"/></svg>
<div class="t m" style="left:1910.75px;top:1225.03px;font-size:27.57px;line-height:27.57px;font-family:'Liberation Mono', monospace;"><span style="color:#1f1f1f;">rgba(var(</span><span style="color:#1a55d9;">––bs–white–rgb</span><span style="color:#1f1f1f;">), var(</span><span style="color:#1a55d9;">––bs–bg–opacity</span><span style="color:#1f1f1f;">))</span></div>
<div class="t m" style="left:1826.00px;top:1257.53px;font-size:27.57px;line-height:27.57px;font-family:'Liberation Mono', monospace;"><span style="color:#1f1f1f;">!important;</span></div>
<div class="t m" style="left:1733.50px;top:1290.03px;font-size:27.57px;line-height:27.57px;font-family:'Liberation Mono', monospace;"><span style="color:#1f1f1f;">}</span></div>
<div class="r" style="left:1723px;top:1325.5px;width:995px;height:2px;background:#d3e1f7;"></div>
<div class="t m" style="left:1733.50px;top:1337.53px;font-size:27.57px;line-height:27.57px;font-family:'Liberation Mono', monospace;"><span style="color:#1f1f1f;">.p–3 {</span></div>
<div class="t m" style="left:2596.69px;top:1337.53px;font-size:27.57px;line-height:27.57px;font-family:'Liberation Mono', monospace;"><span style="color:#1f1f1f;">&lt;style&gt;</span></div>
<div class="t m" style="left:1778.50px;top:1377.53px;font-size:27.57px;line-height:27.57px;font-family:'Liberation Mono', monospace;"><span style="color:#d12b25;">padding</span><span style="color:#1f1f1f;">:</span></div>
<div class="t m" style="left:1953.00px;top:1377.53px;font-size:27.57px;line-height:27.57px;font-family:'Liberation Mono', monospace;"><span style="color:#1f1f1f;">1rem !important;</span></div>
<svg class="s" style="left:1923px;top:1378px;" width="20" height="24" viewBox="1923 1378 20 24"><path d="M1925.75 1381.5 L1940.75 1390.4 L1925.75 1399.25 Z" fill="#474747"/></svg>
<div class="t m" style="left:1733.50px;top:1413.78px;font-size:27.57px;line-height:27.57px;font-family:'Liberation Mono', monospace;"><span style="color:#1f1f1f;">}</span></div>
<div class="r" style="left:0px;top:1310px;width:2718px;height:120px;background:radial-gradient(ellipse 1100px 185px at 1600px 220px, rgba(0,0,0,.2) 0%, rgba(0,0,0,.13) 55%, rgba(0,0,0,0) 100%);"></div>
<svg class="s" style="left:2690px;top:1400px" width="34" height="30" viewBox="2690 1400 34 30"><path d="M2718 1408 Q2718 1430 2704 1430 L2724 1430 L2724 1408 Z" fill="#a9a9a9"/></svg>
<svg class="s" style="left:0px;top:1410px" width="20" height="20" viewBox="0 1410 20 20"><path d="M0 1414 Q0 1430 14 1430 L0 1430 Z" fill="#9a9ca3"/></svg>
</body></html>
